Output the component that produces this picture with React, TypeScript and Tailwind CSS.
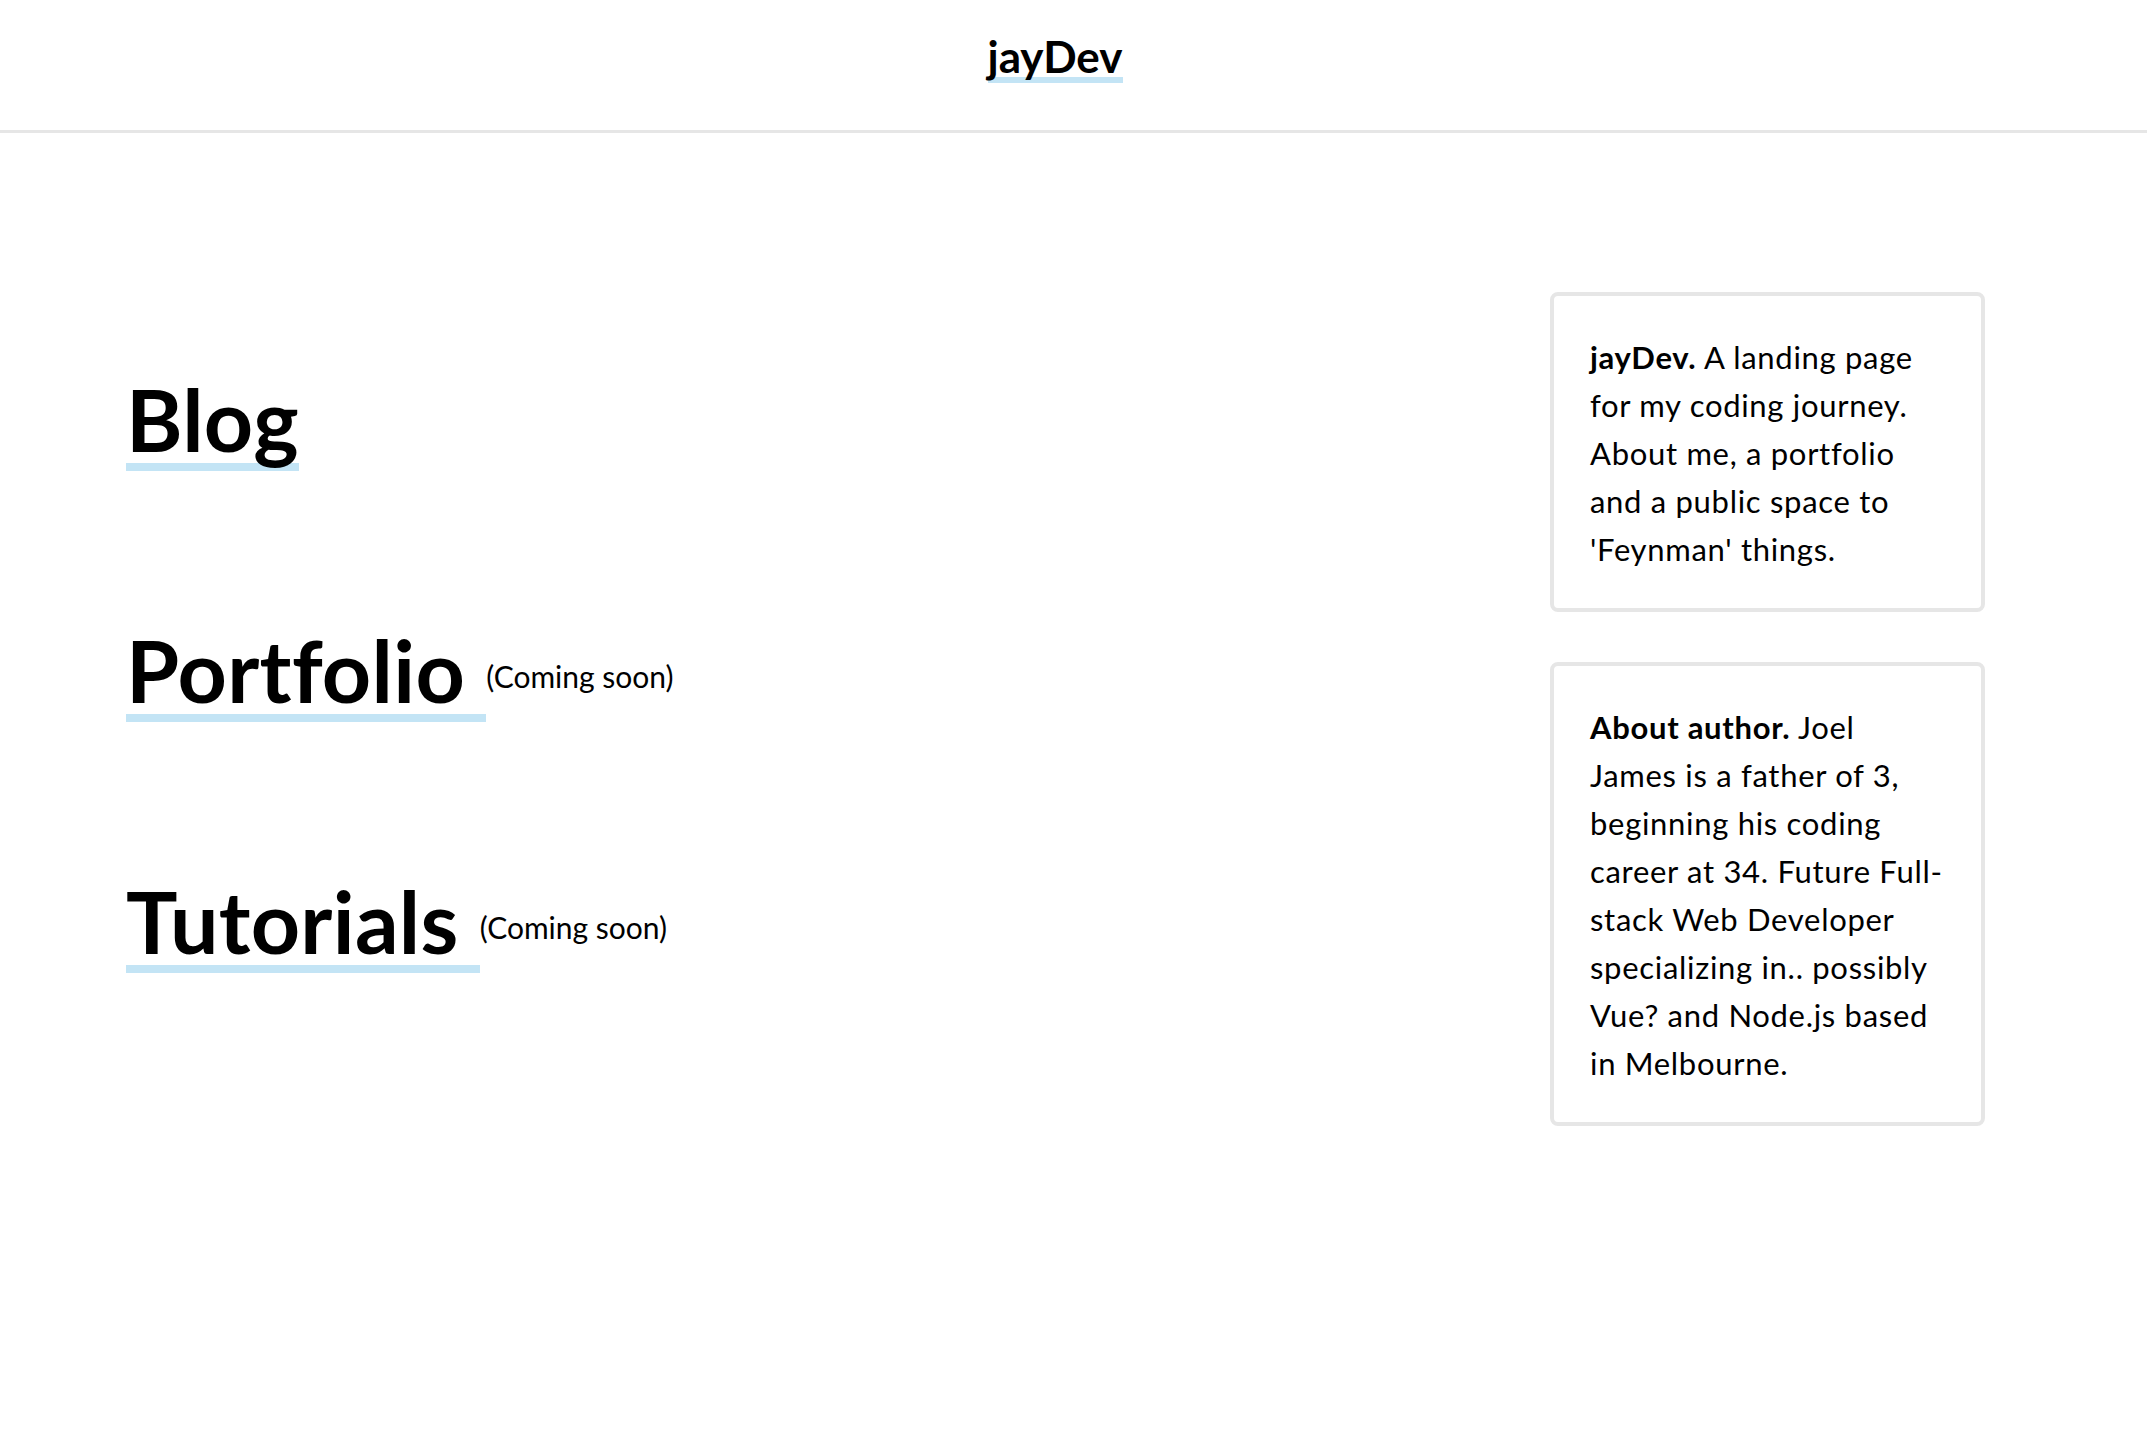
import React from "react";

const font = { fontFamily: "Lato, 'Noto Sans', 'Liberation Sans', sans-serif" };

function Heading({ title, soon }: { title: string; soon?: boolean }) {
  return (
    <div className="text-[86px] leading-[105px] tracking-[0.3px] text-black">
      <span className="inline-block font-bold shadow-[inset_0_-8px_0_#c3e4f5] whitespace-pre">
        {soon ? title + " " : title}
      </span>
      {soon && (
        <span className="align-[15px] text-[30px] leading-normal tracking-normal text-black">
          (Coming soon)
        </span>
      )}
    </div>
  );
}

function Card({ lead, lines }: { lead: string; lines: string[] }) {
  return (
    <div className="whitespace-nowrap rounded-[8px] border-[4px] border-[#e6e6e6] px-[36px] pt-[37px] pb-[35px] text-[31px] leading-[48px] tracking-[0.7px]">
      {lines.map((l, i) => (
        <div key={i}>
          {i === 0 && <b>{lead}</b>}
          {l}
        </div>
      ))}
    </div>
  );
}

export default function App() {
  return (
    <div className="min-h-[1435px] bg-white text-black" style={font}>
      <header className="h-[133px] border-b-[3px] border-[#e6e6e6] flex justify-center pr-[37px] pt-[29px]">
        <span className="block h-[54px] text-[44px] font-bold leading-[54px] shadow-[inset_0_-6px_0_#c3e4f5]">
          jayDev
        </span>
      </header>
      <main className="flex justify-between pl-[126px] pr-[162px]">
        <section className="flex flex-col gap-[146px] pt-[233px]">
          <Heading title="Blog" />
          <Heading title="Portfolio" soon />
          <Heading title="Tutorials" soon />
        </section>
        <aside className="flex w-[435px] flex-col gap-[50px] pt-[159px]">
          <Card
            lead="jayDev."
            lines={[
              " A landing page",
              "for my coding journey.",
              "About me, a portfolio",
              "and a public space to",
              "'Feynman' things.",
            ]}
          />
          <Card
            lead="About author."
            lines={[
              " Joel",
              "James is a father of 3,",
              "beginning his coding",
              "career at 34. Future Full-",
              "stack Web Developer",
              "specializing in.. possibly",
              "Vue? and Node.js based",
              "in Melbourne.",
            ]}
          />
        </aside>
      </main>
    </div>
  );
}
